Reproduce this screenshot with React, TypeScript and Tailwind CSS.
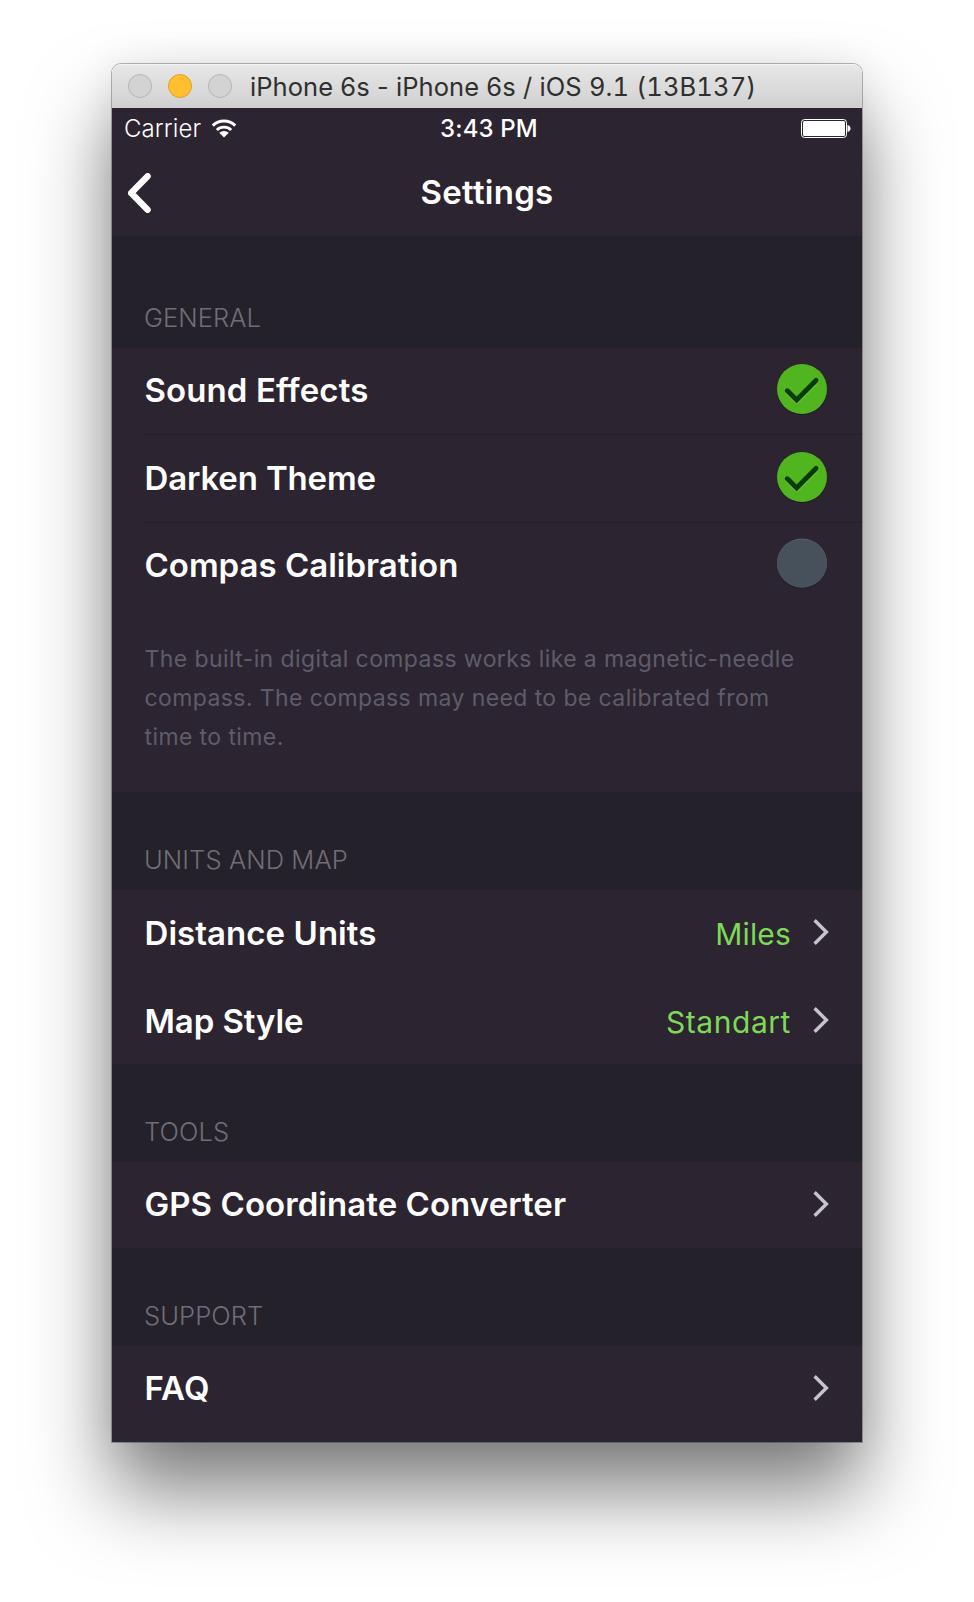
import React from "react";

function Check() {
  return (
    <svg width="54" height="56" viewBox="0 0 54 56" className="shrink-0">
      <ellipse cx="27" cy="28.2" rx="25" ry="24.8" fill="#1f1b26" />
      <circle cx="27" cy="27" r="25" fill="#51b51f" />
      <path d="M12.5 30 L21.6 39.2 L41 19.6" fill="none" stroke="#8bd767" strokeWidth="4.6" strokeLinecap="round" strokeLinejoin="round" />
      <path d="M12.3 28.8 L21.6 38 L41 18.4" fill="none" stroke="#063c05" strokeWidth="5" strokeLinecap="round" strokeLinejoin="miter" />
    </svg>
  );
}

function Dot() {
  return (
    <svg width="54" height="56" viewBox="0 0 54 56" className="shrink-0">
      <ellipse cx="27" cy="27.3" rx="25" ry="24.3" fill="#1f1b26" />
      <ellipse cx="27" cy="26" rx="25" ry="24.4" fill="#5f6974" />
      <ellipse cx="27" cy="26.4" rx="25" ry="24.2" fill="#47515c" />
    </svg>
  );
}

function Chevron() {
  return (
    <svg width="18" height="28" viewBox="0 0 18 28" className="shrink-0">
      <path d="M2.6 2.2 L14.4 14 L2.6 25.8" fill="none" stroke="#c8c4cc" strokeWidth="3.4" />
    </svg>
  );
}

function SectionHeader({ label, className = "h-[98px]" }: { label: string; className?: string }) {
  return (
    <div className={`flex items-end bg-[#24212b] px-8 ${className}`}>
      <h2 className="pb-[13px] text-[25.5px] leading-[34px] font-[330] tracking-[0.1px] text-[#716d76]">{label}</h2>
    </div>
  );
}

type RowProps = {
  label: string;
  size: string;
  labelClass?: string;
  divider?: boolean;
  children: React.ReactNode;
};

function Row({ label, size, labelClass = "pt-5", divider = false, children }: RowProps) {
  return (
    <div className={`flex pl-8 ${size}`}>
      <div className={`flex flex-1 items-start justify-between pr-[33px] ${divider ? "border-b border-[#231f2a]" : ""}`}>
        <span className={`pl-[0.5px] text-[33px] leading-[44px] font-[560] whitespace-nowrap text-white ${labelClass}`}>{label}</span>
        {children}
      </div>
    </div>
  );
}

function Value({ text, textClass = "" }: { text?: string; textClass?: string }) {
  return (
    <div className="-mr-px flex">
      {text && <span className={`pt-[22px] pr-[21px] text-[30px] leading-[44px] font-[370] text-[#7ed957] ${textClass}`}>{text}</span>}
      <span className="pt-[28px]"><Chevron /></span>
    </div>
  );
}

export default function App() {
  return (
    <div className="flex h-[1602px] w-[974px] flex-col overflow-hidden bg-white pt-16 pl-28 font-['Inter',sans-serif]">
      <div className="w-[750px] rounded-t-[9px] shadow-[0_0_0_1px_rgba(0,0,0,0.28),0_50px_80px_rgba(0,0,0,0.5),0_0_40px_rgba(0,0,0,0.08)]">
        <header className="flex h-11 items-center rounded-t-[9px] border-t border-[#f4f4f4] bg-linear-to-b from-[#e7e7e7] to-[#d0d0d0] pl-4">
          <div className="flex gap-4 pb-px">
            <span className="size-6 rounded-full border border-[#b5b5b5] bg-[#d3d3d3]" />
            <span className="size-6 rounded-full border border-[#dfa023] bg-[#ffbf2f]" />
            <span className="size-6 rounded-full border border-[#b5b5b5] bg-[#d3d3d3]" />
          </div>
          <span className="pl-[18px] text-[25.5px] leading-8 tracking-[0.06px] whitespace-nowrap text-[#2f2f2f]">
            iPhone 6s - iPhone 6s / iOS <span className="tracking-[0.12px] tabular-nums">9.1 (13B137)</span>
          </span>
        </header>

        <main className="h-[1334px] overflow-hidden bg-[#2c2430]">
          <div className="grid h-10 grid-cols-3 items-center pt-0.5 pr-[11px] pl-3 text-white">
            <div className="flex items-center gap-2.5">
              <span className="text-[24px] leading-9 font-[350] tracking-[0.1px]">Carrier</span>
              <svg width="26" height="20" viewBox="0 0 26 20">
                <path d="M1.8 6.6 A16 16 0 0 1 24.2 6.6" fill="none" stroke="white" strokeWidth="3" />
                <path d="M5.8 11 A10.4 10.4 0 0 1 20.2 11" fill="none" stroke="white" strokeWidth="2.9" />
                <path d="M8.2 13.8 A7 7 0 0 1 17.8 13.8 L13 18.6 Z" fill="white" />
              </svg>
            </div>
            <span className="pl-[3px] text-center text-[24px] leading-9 font-[550] tracking-[0.15px]">3:43 PM</span>
            <svg width="50" height="20" viewBox="0 0 50 20" className="justify-self-end">
              <rect x="0.5" y="0.5" width="45" height="18" rx="3" fill="none" stroke="white" />
              <rect x="2" y="2" width="42" height="15" rx="1.5" fill="white" />
              <path d="M46.5 6 q3 0.8 3 3.5 t-3 3.5z" fill="white" />
            </svg>
          </div>

          <nav className="grid h-22 grid-cols-3 items-start px-4">
            <svg width="24" height="40" viewBox="0 0 24 40" className="mt-[25px]">
              <path d="M19.6 3.2 L3.2 20 L19.6 36.8" fill="none" stroke="white" strokeWidth="6.4" strokeLinecap="round" strokeLinejoin="round" />
            </svg>
            <h1 className="pt-[22px] text-center text-[33px] leading-[44px] font-[560] tracking-[0.25px] text-white">Settings</h1>
          </nav>

          <SectionHeader label="GENERAL" className="h-28" />
          <section className="h-[444px]">
            <Row label="Sound Effects" size="h-[87px]" labelClass="pt-5 tracking-[0.1px]" divider>
              <span className="pt-[14px]"><Check /></span>
            </Row>
            <Row label="Darken Theme" size="h-[88px]" labelClass="pt-[21px] tracking-[-0.15px]" divider>
              <span className="pt-[15px]"><Check /></span>
            </Row>
            <Row label="Compas Calibration" size="h-[88px]">
              <span className="pt-[14px]"><Dot /></span>
            </Row>
            <p className="w-[720px] pt-[29px] pl-[32.5px] text-[23px] leading-[39px] tracking-[0.4px] text-[#5f5c6a]">
              The built-in digital compass works like a magnetic-needle
              <br />
              compass. The compass may need to be calibrated from
              <br />
              time to time.
            </p>
          </section>

          <SectionHeader label="UNITS AND MAP" />
          <section>
            <Row label="Distance Units" size="h-[88px]" labelClass="pt-[21px] tracking-[0.05px]"><Value text="Miles" textClass="tracking-[0.15px]" /></Row>
            <Row label="Map Style" size="h-[86px]" labelClass="pt-[21px] tracking-[-0.1px]"><Value text="Standart" textClass="tracking-[0.55px]" /></Row>
          </section>

          <SectionHeader label="TOOLS" />
          <section>
            <Row label="GPS Coordinate Converter" size="h-[86px]" labelClass="pt-5 tracking-[0.06px]"><Value /></Row>
          </section>

          <SectionHeader label="SUPPORT" />
          <section>
            <Row label="FAQ" size="h-24" labelClass="pt-5 tracking-[0.2px]"><Value /></Row>
          </section>
        </main>
      </div>
    </div>
  );
}
